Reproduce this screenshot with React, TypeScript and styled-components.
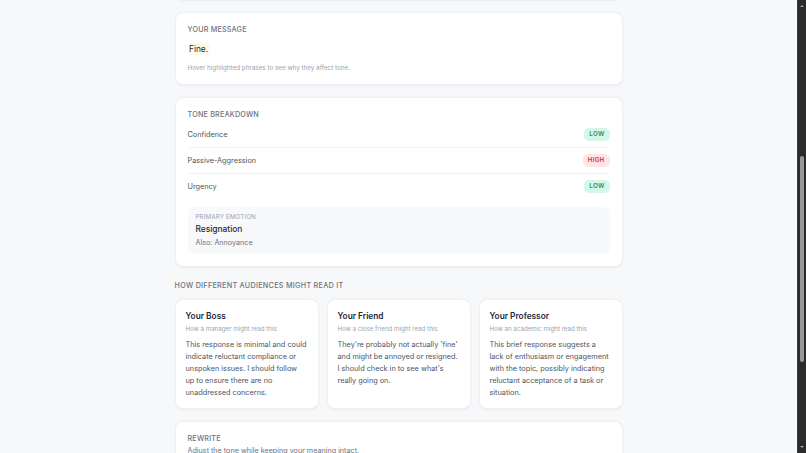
import React from 'react';
import styled, { createGlobalStyle } from 'styled-components';

const GlobalStyle = createGlobalStyle`
  html,
  body {
    margin: 0;
    padding: 0;
    height: 100%;
    overflow: hidden;
  }

  body {
    background: #f7f8fa;
    font-family: Inter, 'Noto Sans', 'Liberation Sans', sans-serif;
    color: #1f2937;
    -webkit-font-smoothing: antialiased;
  }
`;

const Frame = styled.div`
  display: flex;
  height: 100vh;
`;

const Viewport = styled.div`
  flex: 1;
  min-width: 0;
  overflow-y: auto;
  scrollbar-width: none;

  &::-webkit-scrollbar {
    display: none;
  }
`;

const ScrollRail = styled.div`
  width: 8px;
  flex: none;
  display: flex;
  flex-direction: column;
  background: #2b2b2b;
  border-left: 0.5px solid #3a3a3a;
`;

const RailArrow = styled.div<{ $dir: 'up' | 'down' }>`
  height: 12px;
  flex: none;
  display: flex;
  align-items: center;
  justify-content: center;

  &::before {
    content: '';
    border-left: 2px solid transparent;
    border-right: 2px solid transparent;
    ${(p) =>
      p.$dir === 'up'
        ? 'border-bottom: 2.5px solid #a3a3a3;'
        : 'border-top: 2.5px solid #a3a3a3;'}
  }
`;

const RailTrack = styled.div`
  flex: 1;
  display: flex;
  flex-direction: column;
  align-items: center;
`;

const RailThumb = styled.div`
  width: 4px;
  border-radius: 2px;
  background: #979797;
`;

const Page = styled.main`
  max-width: 448px;
  margin: 0 auto;
  padding: 20px 0 24px;
  display: flex;
  flex-direction: column;
  gap: 12.5px;
`;

const Header = styled.header`
  display: flex;
  flex-direction: column;
  gap: 2px;
`;

const Title = styled.h1`
  margin: 0;
  font-size: 12px;
  line-height: 16px;
  font-weight: 700;
  color: #111827;
`;

const Subtitle = styled.p`
  margin: 0;
  font-size: 7.2px;
  line-height: 10px;
  color: #6b7280;
`;

const Card = styled.section`
  background: #ffffff;
  border: 0.5px solid #eef0f3;
  border-radius: 8px;
  box-shadow: 0 0.5px 1.5px rgba(16, 24, 40, 0.05);
  padding: 12px;
`;

const Label = styled.h2<{ $gap?: number }>`
  margin: 0 0 ${(p) => p.$gap ?? 8}px;
  font-size: 7.2px;
  line-height: 10px;
  font-weight: 500;
  letter-spacing: 0.2px;
  text-transform: uppercase;
  color: #6b7280;
`;

const TextArea = styled.div`
  height: 168px;
  border: 0.5px solid #e5e7eb;
  border-radius: 6px;
  padding: 8px;
  font-size: 8px;
  line-height: 12px;
  color: #1f2937;
`;

const ButtonRow = styled.div`
  display: flex;
  justify-content: flex-end;
  gap: 6px;
  margin-top: 8px;
`;

const Button = styled.button<{ $primary?: boolean }>`
  height: 18px;
  padding: 0 10px;
  border-radius: 6px;
  border: 0.5px solid ${(p) => (p.$primary ? '#111827' : '#e5e7eb')};
  background: ${(p) => (p.$primary ? '#111827' : '#ffffff')};
  color: ${(p) => (p.$primary ? '#ffffff' : '#374151')};
  font-family: inherit;
  font-size: 7px;
  font-weight: 500;
`;

const Message = styled.p`
  margin: 0;
  font-size: 8.3px;
  line-height: 12.5px;
  color: #1f2937;
`;

const Highlight = styled.span`
  background: #fdfbe6;
  border-radius: 2px;
  padding: 1px 1.5px;
`;

const Hint = styled.p`
  margin: 8px 0 0;
  font-size: 6.3px;
  line-height: 8px;
  color: #9ca3af;
`;

const ToneList = styled.ul`
  list-style: none;
  margin: 0;
  padding: 0;
`;

const ToneRow = styled.li`
  display: flex;
  align-items: center;
  justify-content: space-between;
  height: 25px;
  font-size: 7.3px;
  color: #4b5563;

  & + & {
    border-top: 0.5px solid #f1f2f4;
  }
`;

const Badge = styled.span<{ $level: 'LOW' | 'HIGH' }>`
  padding: 2px 5px;
  border-radius: 5px;
  font-size: 6.2px;
  line-height: 8.5px;
  font-weight: 600;
  letter-spacing: 0.3px;
  background: ${(p) => (p.$level === 'HIGH' ? '#ffe4e8' : '#d6f7e7')};
  color: ${(p) => (p.$level === 'HIGH' ? '#e11d48' : '#059669')};
`;

const EmotionBox = styled.div`
  margin-top: 8px;
  padding: 6px 8px;
  border-radius: 6px;
  background: #f8f9fb;
`;

const EmotionLabel = styled.div`
  font-size: 6.2px;
  line-height: 8px;
  letter-spacing: 0.15px;
  text-transform: uppercase;
  color: #9ca3af;
`;

const EmotionName = styled.div`
  margin-top: 2px;
  font-size: 8.4px;
  line-height: 12px;
  font-weight: 500;
  color: #1f2937;
`;

const EmotionAlso = styled.div`
  margin-top: 3px;
  font-size: 7.2px;
  line-height: 10px;
  color: #6b7280;
`;

const Section = styled.section`
  display: flex;
  flex-direction: column;
`;

const SectionHeading = styled.h2`
  margin: 0 0 8px;
  font-size: 7.2px;
  line-height: 11px;
  font-weight: 500;
  letter-spacing: 0.3px;
  text-transform: uppercase;
  color: #6b7280;
`;

const AudienceGrid = styled.div`
  display: grid;
  grid-template-columns: repeat(3, 1fr);
  gap: 8px;
`;

const AudienceCard = styled.article`
  background: #ffffff;
  border: 0.5px solid #eef0f3;
  border-radius: 8px;
  box-shadow: 0 0.5px 1.5px rgba(16, 24, 40, 0.05);
  padding: 10px 11px 9px 10px;
`;

const AudienceName = styled.h3`
  margin: 0;
  font-size: 8.3px;
  line-height: 12px;
  font-weight: 600;
  color: #1f2937;
`;

const AudienceHint = styled.p`
  margin: 3px 0 0;
  font-size: 6.2px;
  line-height: 8px;
  color: #9ca3af;
`;

const AudienceText = styled.p`
  margin: 6px 0 0;
  font-size: 7.3px;
  line-height: 12px;
  color: #4b5563;
`;

const Description = styled.p`
  margin: 0;
  font-size: 7.2px;
  line-height: 10px;
  color: #6b7280;
`;

const ChipRow = styled.div`
  display: flex;
  flex-wrap: wrap;
  gap: 4px;
  margin-top: 8px;
`;

const Chip = styled.span<{ $active?: boolean }>`
  padding: 3px 7px;
  border-radius: 9px;
  font-size: 6.2px;
  line-height: 10px;
  border: 0.5px solid ${(p) => (p.$active ? '#111827' : '#e5e7eb')};
  background: ${(p) => (p.$active ? '#111827' : '#ffffff')};
  color: ${(p) => (p.$active ? '#ffffff' : '#4b5563')};
`;

const Output = styled.div`
  margin-top: 8px;
  min-height: 60px;
  padding: 6px 8px;
  border-radius: 6px;
  background: #f8f9fb;
  font-size: 7.2px;
  line-height: 11px;
  color: #4b5563;
`;

type Level = 'LOW' | 'HIGH';

const tones: { name: string; level: Level }[] = [
  { name: 'Confidence', level: 'LOW' },
  { name: 'Passive-Aggression', level: 'HIGH' },
  { name: 'Urgency', level: 'LOW' },
];

const audiences = [
  {
    name: 'Your Boss',
    hint: 'How a manager might read this',
    text: 'This response is minimal and could indicate reluctant compliance or unspoken issues. I should follow up to ensure there are no unaddressed concerns.',
  },
  {
    name: 'Your Friend',
    hint: 'How a close friend might read this',
    text: "They're probably not actually 'fine' and might be annoyed or resigned. I should check in to see what's really going on.",
  },
  {
    name: 'Your Professor',
    hint: 'How an academic might read this',
    text: 'This brief response suggests a lack of enthusiasm or engagement with the topic, possibly indicating reluctant acceptance of a task or situation.',
  },
];

const rewriteTones = ['Warmer', 'More confident', 'More direct', 'More formal'];

const App: React.FC = () => {
  const viewportRef = React.useRef<HTMLDivElement>(null);
  const trackRef = React.useRef<HTMLDivElement>(null);
  const messageRef = React.useRef<HTMLElement>(null);
  const [thumb, setThumb] = React.useState({ top: 0, height: 0 });

  // the capture shows the results area, scrolled past the composer
  React.useLayoutEffect(() => {
    const view = viewportRef.current;
    const track = trackRef.current;
    const msg = messageRef.current;
    if (!view || !track || !msg) return;
    view.scrollTop =
      msg.getBoundingClientRect().top - view.getBoundingClientRect().top - 12;
    const trackHeight = track.clientHeight;
    setThumb({
      top: (view.scrollTop / view.scrollHeight) * trackHeight,
      height: (view.clientHeight / view.scrollHeight) * trackHeight,
    });
  }, []);

  return (
    <>
      <GlobalStyle />
      <Frame>
        <Viewport ref={viewportRef}>
          <Page>
            <Header>
              <Title>Tone Check</Title>
              <Subtitle>See how your message might come across before you send it.</Subtitle>
            </Header>

            <Card>
              <Label $gap={6}>Write your message</Label>
              <TextArea>Fine.</TextArea>
              <ButtonRow>
                <Button>Clear</Button>
                <Button $primary>Analyze tone</Button>
              </ButtonRow>
            </Card>

            <Card ref={messageRef}>
              <Label>Your message</Label>
              <Message>
                <Highlight>Fine.</Highlight>
              </Message>
              <Hint>Hover highlighted phrases to see why they affect tone.</Hint>
            </Card>

            <Card>
              <Label $gap={2}>Tone breakdown</Label>
              <ToneList>
                {tones.map((tone) => (
                  <ToneRow key={tone.name}>
                    {tone.name}
                    <Badge $level={tone.level}>{tone.level}</Badge>
                  </ToneRow>
                ))}
              </ToneList>
              <EmotionBox>
                <EmotionLabel>Primary emotion</EmotionLabel>
                <EmotionName>Resignation</EmotionName>
                <EmotionAlso>Also: Annoyance</EmotionAlso>
              </EmotionBox>
            </Card>

            <Section>
              <SectionHeading>How different audiences might read it</SectionHeading>
              <AudienceGrid>
                {audiences.map((a) => (
                  <AudienceCard key={a.name}>
                    <AudienceName>{a.name}</AudienceName>
                    <AudienceHint>{a.hint}</AudienceHint>
                    <AudienceText>{a.text}</AudienceText>
                  </AudienceCard>
                ))}
              </AudienceGrid>
            </Section>

            <Card>
              <Label $gap={2}>Rewrite</Label>
              <Description>Adjust the tone while keeping your meaning intact.</Description>
              <ChipRow>
                {rewriteTones.map((t, i) => (
                  <Chip key={t} $active={i === 0}>
                    {t}
                  </Chip>
                ))}
              </ChipRow>
              <Output>Sounds good to me — happy to go with that.</Output>
              <ButtonRow>
                <Button>Copy</Button>
                <Button $primary>Rewrite</Button>
              </ButtonRow>
            </Card>
          </Page>
        </Viewport>
        <ScrollRail>
          <RailArrow $dir="up" />
          <RailTrack ref={trackRef}>
            <RailThumb style={{ marginTop: thumb.top, height: thumb.height }} />
          </RailTrack>
          <RailArrow $dir="down" />
        </ScrollRail>
      </Frame>
    </>
  );
};

export default App;
